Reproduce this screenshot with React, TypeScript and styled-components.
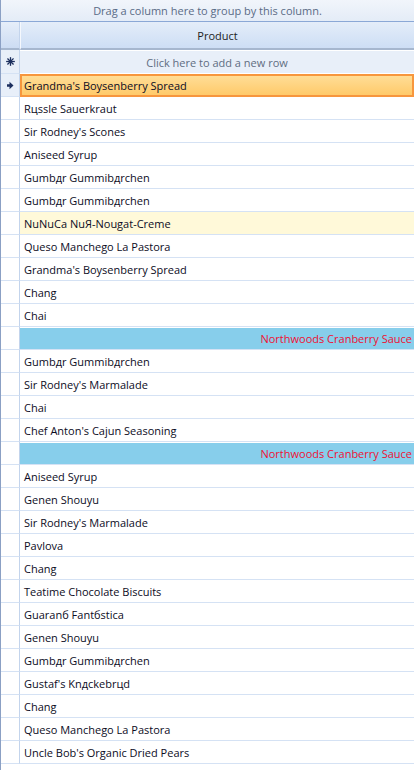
import React from "react";
import styled, { createGlobalStyle } from "styled-components";

const Global = createGlobalStyle`
  html, body { margin: 0; padding: 0; background: #ffffff; }
  body { font-family: "Open Sans", "Noto Sans", Arial, sans-serif; font-size: 11px; }
`;

const Grid = styled.div`
  width: 414px;
  height: 770px;
  box-sizing: border-box;
  border-left: 1px solid #8ba0c4;
  display: flex;
  flex-direction: column;
  overflow: hidden;
  background: #fff;
`;

const GroupPanel = styled.div`
  height: 21px;
  flex: none;
  display: flex;
  align-items: center;
  justify-content: center;
  color: #5a6b86;
  background: linear-gradient(#f1f5fb, #e4ecf7);
  border-bottom: 1px solid #8ba8d6;
`;

const Row = styled.div<{ $h: number }>`
  display: grid;
  grid-template-columns: 19px 1fr;
  height: ${(p) => p.$h}px;
  flex: none;
`;

const IndicatorCell = styled.div<{ $variant: "header" | "new" | "current" | "plain" | "group" }>`
  display: flex;
  align-items: center;
  justify-content: center;
  border-right: 1px solid #c3d4ec;
  box-sizing: border-box;
  background: ${(p) =>
    p.$variant === "header"
      ? "linear-gradient(#e6eef9, #ccdcf3)"
      : p.$variant === "new" || p.$variant === "current"
      ? "#e8eff9"
      : "#ffffff"};
  border-bottom: ${(p) =>
    p.$variant === "header" ? "2px solid #a6b7cf" : "1px solid #d5e2f4"};
`;

const HeaderCell = styled.div`
  display: flex;
  align-items: center;
  justify-content: center;
  color: #1d1d1d;
  background: linear-gradient(#e4edf9, #cddef5);
  border-bottom: 2px solid #a6b7cf;
  border-left: 1px solid #f5f8fd;
`;

const NewRowCell = styled.div`
  display: flex;
  align-items: center;
  justify-content: center;
  color: #5f6d82;
  background: #e8eff9;
  border-top: 1px solid #ffffff;
  border-bottom: 1px solid #ffffff;
`;

const DataCell = styled.div<{ $kind: "plain" | "current" | "hover" }>`
  display: flex;
  align-items: center;
  color: #0c0c24;
  box-sizing: border-box;
  white-space: nowrap;
  overflow: hidden;
  background: ${(p) =>
    p.$kind === "current"
      ? "linear-gradient(#ffdd96, #ffca6a)"
      : p.$kind === "hover"
      ? "#fff9d9"
      : "#ffffff"};
  border: ${(p) => (p.$kind === "current" ? "2px solid #f7963d" : "none")};
  border-bottom: ${(p) =>
    p.$kind === "current" ? "2px solid #f7963d" : "1px solid #d5e2f4"};
  padding-left: ${(p) => (p.$kind === "current" ? "2px" : "4px")};
`;

const GroupCell = styled.div`
  display: flex;
  align-items: center;
  justify-content: flex-end;
  color: #ee1133;
  background: #87ceeb;
  border-bottom: 1px solid #d5e2f4;
  border-top: 1px solid #ffffff;
  white-space: nowrap;
  overflow: hidden;
  padding-right: 2px;
`;

type R = { t: string; kind?: "current" | "hover" | "group" };

const rows: R[] = [
  { t: "Grandma's Boysenberry Spread", kind: "current" },
  { t: "Rцssle Sauerkraut" },
  { t: "Sir Rodney's Scones" },
  { t: "Aniseed Syrup" },
  { t: "Gumbдr Gummibдrchen" },
  { t: "Gumbдr Gummibдrchen" },
  { t: "NuNuCa NuЯ-Nougat-Creme", kind: "hover" },
  { t: "Queso Manchego La Pastora" },
  { t: "Grandma's Boysenberry Spread" },
  { t: "Chang" },
  { t: "Chai" },
  { t: "Northwoods Cranberry Sauce", kind: "group" },
  { t: "Gumbдr Gummibдrchen" },
  { t: "Sir Rodney's Marmalade" },
  { t: "Chai" },
  { t: "Chef Anton's Cajun Seasoning" },
  { t: "Northwoods Cranberry Sauce", kind: "group" },
  { t: "Aniseed Syrup" },
  { t: "Genen Shouyu" },
  { t: "Sir Rodney's Marmalade" },
  { t: "Pavlova" },
  { t: "Chang" },
  { t: "Teatime Chocolate Biscuits" },
  { t: "Guaranб Fantбstica" },
  { t: "Genen Shouyu" },
  { t: "Gumbдr Gummibдrchen" },
  { t: "Gustaf's Knдckebrцd" },
  { t: "Chang" },
  { t: "Queso Manchego La Pastora" },
  { t: "Uncle Bob's Organic Dried Pears" },
];

const Star = () => (
  <svg width="9" height="9" viewBox="0 0 9 9">
    <g stroke="#1c2f5e" strokeWidth="1.3" strokeLinecap="square">
      <line x1="4.5" y1="0.8" x2="4.5" y2="8.2" />
      <line x1="0.8" y1="4.5" x2="8.2" y2="4.5" />
      <line x1="1.9" y1="1.9" x2="7.1" y2="7.1" />
      <line x1="7.1" y1="1.9" x2="1.9" y2="7.1" />
    </g>
  </svg>
);

const Arrow = () => (
  <svg width="8" height="9" viewBox="0 0 8 9">
    <path d="M1 3.2 H3.5 V0.8 L7.5 4.5 L3.5 8.2 V5.8 H1 Z" fill="#1c2f5e" />
  </svg>
);

export default function App() {
  return (
    <>
      <Global />
      <Grid>
        <GroupPanel>Drag a column here to group by this column.</GroupPanel>
        <Row $h={28}>
          <IndicatorCell $variant="header" />
          <HeaderCell>Product</HeaderCell>
        </Row>
        <Row $h={24}>
          <IndicatorCell $variant="new">
            <Star />
          </IndicatorCell>
          <NewRowCell>Click here to add a new row</NewRowCell>
        </Row>
        {rows.map((r, i) => (
          <Row $h={23} key={i}>
            <IndicatorCell $variant={r.kind === "current" ? "current" : "plain"}>
              {r.kind === "current" ? <Arrow /> : null}
            </IndicatorCell>
            {r.kind === "group" ? (
              <GroupCell>{r.t}</GroupCell>
            ) : (
              <DataCell $kind={r.kind === "current" ? "current" : r.kind === "hover" ? "hover" : "plain"}>
                {r.t}
              </DataCell>
            )}
          </Row>
        ))}
      </Grid>
    </>
  );
}
